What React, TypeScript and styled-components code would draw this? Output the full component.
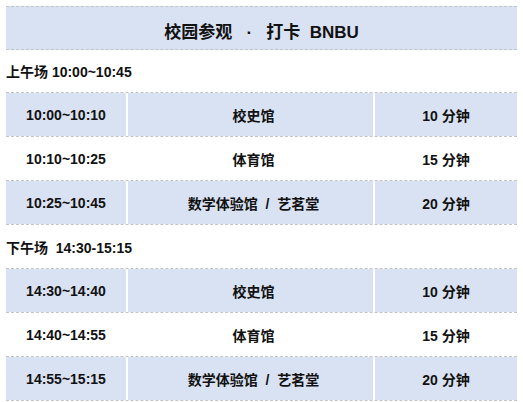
import * as React from 'react';
import styled, { createGlobalStyle } from 'styled-components';

const GlobalStyle = createGlobalStyle`
    html, body {
        margin: 0;
        padding: 0;
        background: #ffffff;
    }
    body {
        font-family: "Liberation Sans", "Noto Sans CJK SC", sans-serif;
        color: #111111;
    }
`;

const dashed = '1px dashed #c4c4c4';
const blue = '#d9e2f3';

const schedule = [
    {
        label: '上午场 10:00~10:45',
        rows: [
            { time: '10:00~10:10', place: '校史馆', length: '10 分钟' },
            { time: '10:10~10:25', place: '体育馆', length: '15 分钟' },
            { time: '10:25~10:45', place: '数学体验馆 \u00a0/\u00a0 艺茗堂', length: '20 分钟' }
        ]
    },
    {
        label: '下午场 \u00a014:30-15:15',
        rows: [
            { time: '14:30~14:40', place: '校史馆', length: '10 分钟' },
            { time: '14:40~14:55', place: '体育馆', length: '15 分钟' },
            { time: '14:55~15:15', place: '数学体验馆 \u00a0/\u00a0 艺茗堂', length: '20 分钟' }
        ]
    }
];

const Sheet = styled.section`
    width: 511px;
    padding: 6px 6px 0;
    display: flex;
    flex-direction: column;
`;

const Title = styled.h1`
    margin: 0;
    height: 37px;
    padding-top: 5px;
    display: flex;
    align-items: center;
    justify-content: center;
    background: ${blue};
    border-top: ${dashed};
    border-bottom: ${dashed};
    font-size: 17px;
    font-weight: 700;
    white-space: pre;
`;

const SessionLabel = styled.div<{ $height: number }>`
    height: ${({ $height }) => $height}px;
    display: flex;
    align-items: center;
    font-size: 14px;
    font-weight: 700;
    white-space: pre;
`;

const Rows = styled.div`
    border-top: ${dashed};
    display: flex;
    flex-direction: column;
`;

const Row = styled.div<{ $shaded: boolean }>`
    display: grid;
    grid-template-columns: 120px 245px 142px;
    column-gap: 2px;
    height: 43px;
    border-bottom: ${dashed};
    background: #ffffff;

    & > div {
        background: ${({ $shaded }) => ($shaded ? blue : '#ffffff')};
    }
`;

const Cell = styled.div<{ $shift?: number }>`
    display: flex;
    align-items: center;
    justify-content: center;
    padding-left: ${({ $shift }) => $shift ?? 0}px;
    font-size: 14px;
    font-weight: 700;
    white-space: pre;
`;

const App = () => {
    return (
        <>
            <GlobalStyle />
            <Sheet>
                <Title>{'校园参观 \u00a0\u00a0·\u00a0\u00a0 打卡  BNBU'}</Title>
                {schedule.map((session, si) => (
                    <React.Fragment key={session.label}>
                        <SessionLabel $height={si === 0 ? 42 : 43}>{session.label}</SessionLabel>
                        <Rows>
                            {session.rows.map((row, i) => (
                                <Row key={row.time} $shaded={i !== 1}>
                                    <Cell>{row.time}</Cell>
                                    <Cell $shift={6}>{row.place}</Cell>
                                    <Cell>{row.length}</Cell>
                                </Row>
                            ))}
                        </Rows>
                    </React.Fragment>
                ))}
            </Sheet>
        </>
    );
};

export default App;
